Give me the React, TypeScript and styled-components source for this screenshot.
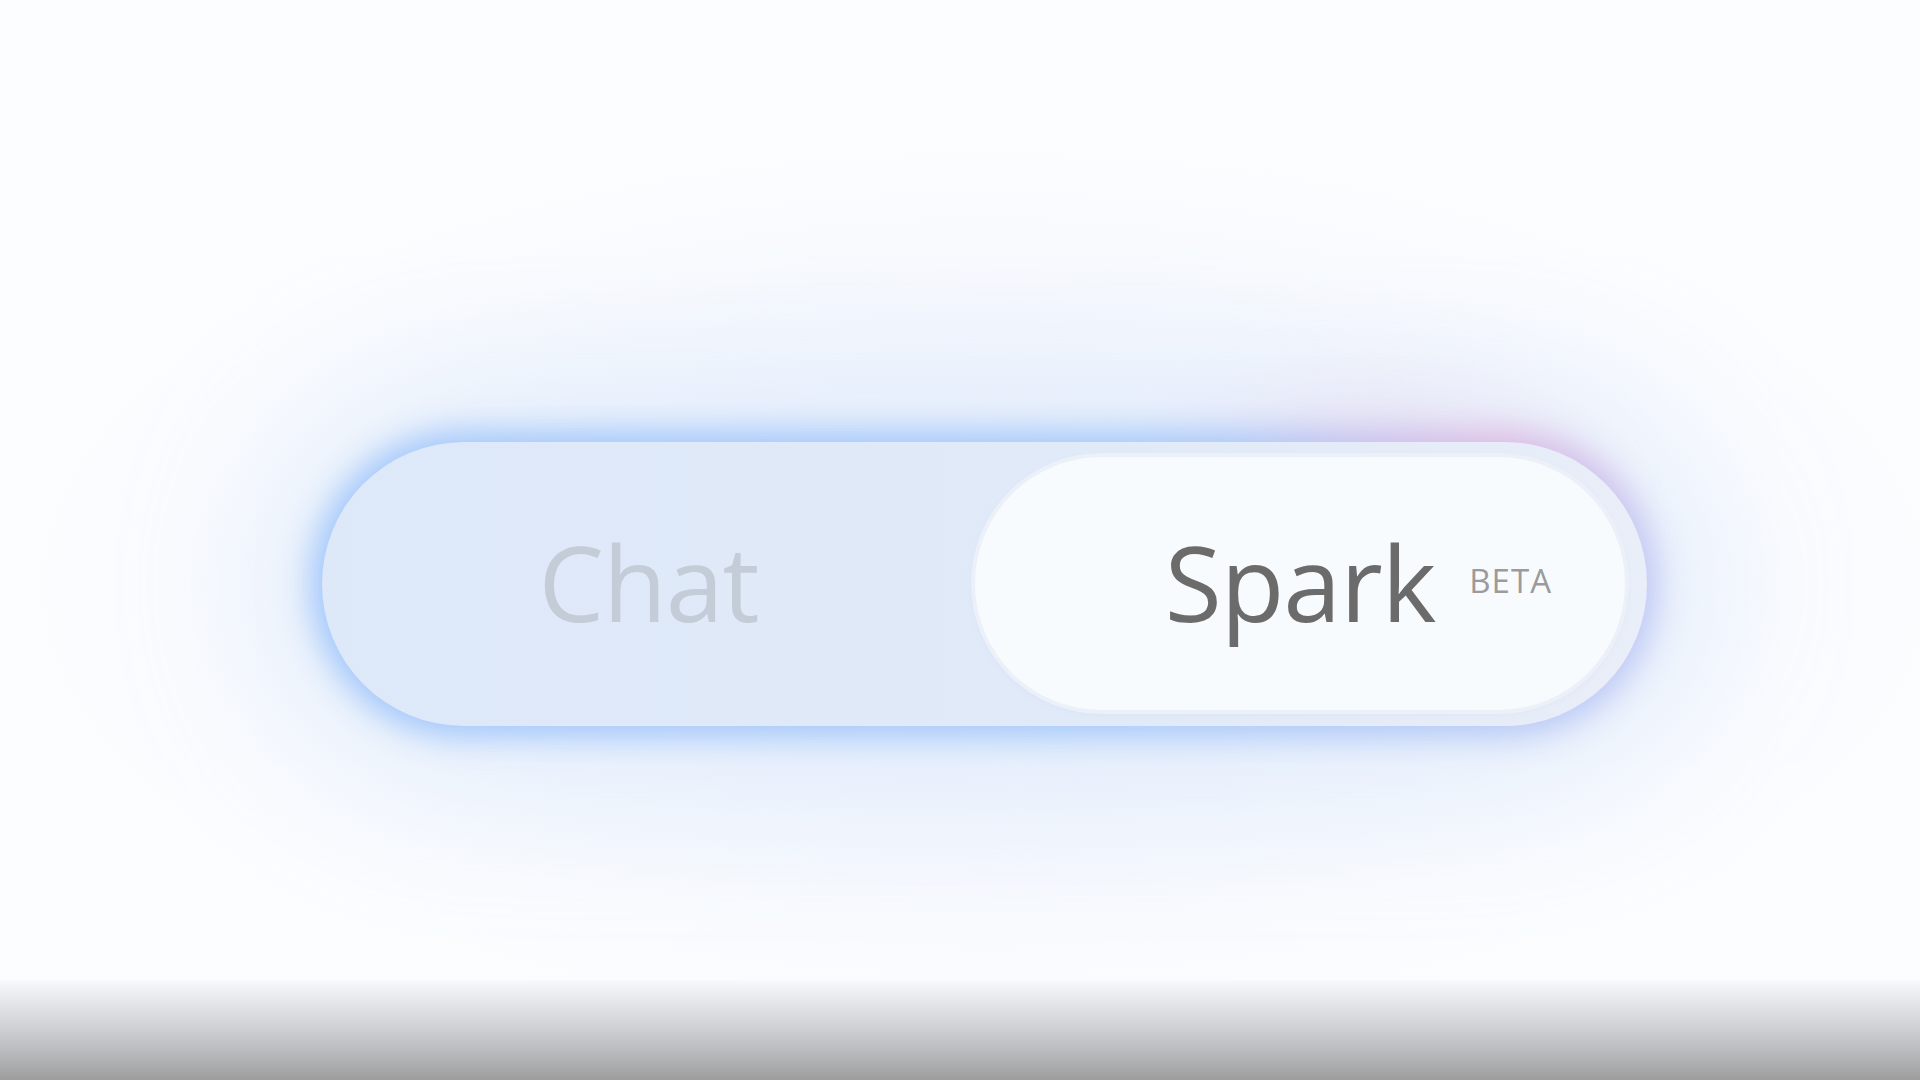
import styled, { createGlobalStyle } from 'styled-components'

const GlobalStyle = createGlobalStyle`
  html, body {
    margin: 0;
    padding: 0;
    background: #fcfdfe;
    font-family: "Open Sans", "Noto Sans", sans-serif;
  }
`

const Screen = styled.div`
  position: relative;
  isolation: isolate;
  width: 1920px;
  height: 1080px;
  display: flex;
  flex-direction: column;
  overflow: hidden;
  background: radial-gradient(ellipse 1050px 480px at 985px 584px, #eaf1fc 0%, #f2f6fd 45%, #f9fbfe 78%, #fcfdfe 100%);
`

const Stage = styled.main`
  flex: 1;
  display: flex;
  align-items: flex-start;
  padding: 442px 0 0 322px;
`

const Toggle = styled.div`
  position: relative;
  width: 1325px;
  height: 284px;
  box-sizing: border-box;
  padding: 15px 22px 16px 0;
  border-radius: 142px;
  background: linear-gradient(90deg, #dde8f9 0%, #e1eaf8 60%, #e9eef8 100%);
  display: grid;
  grid-template-columns: 1fr 650px;
  box-shadow: 0 0 150px 50px rgba(200, 220, 250, 0.4);

  /* coloured glow ring, blue turning pink at the top right */
  &::after {
    content: '';
    position: absolute;
    inset: -10px;
    border-radius: 152px;
    background:
      radial-gradient(ellipse 260px 160px at 88% 0%, rgba(236, 170, 214, 0.95), rgba(236, 170, 214, 0) 100%),
      linear-gradient(90deg, #8fbcfa 0%, #97c0fa 60%, #a8bff4 85%, #bcbff2 100%);
    filter: blur(16px);
    z-index: -1;
  }

  /* soft pink haze above the right end */
  &::before {
    content: '';
    position: absolute;
    right: 10px;
    top: -90px;
    width: 520px;
    height: 330px;
    border-radius: 50%;
    background: radial-gradient(closest-side, rgba(235, 195, 225, 0.7), rgba(240, 215, 235, 0.35) 60%, rgba(255, 255, 255, 0) 100%);
    filter: blur(30px);
    z-index: -2;
  }
`

const Option = styled.div<{ $active?: boolean }>`
  position: relative;
  display: flex;
  align-items: center;
  justify-content: center;
  border-radius: 127px;
  font-size: 104px;
  letter-spacing: -1px;
  color: ${p => (p.$active ? '#6b6b6c' : '#c4ccd7')};
  background: ${p => (p.$active ? '#f8fbfe' : 'transparent')};
  box-shadow: ${p => (p.$active ? '0 0 0 4px #ebf0f9, 0 2px 8px rgba(150, 170, 200, 0.15)' : 'none')};
`

const Label = styled.span`
  position: relative;
  line-height: 1;
  margin-top: -4px;
`

const Badge = styled.span`
  position: absolute;
  left: calc(100% + 34px);
  top: 34px;
  font-size: 33px;
  letter-spacing: 1px;
  color: #9b9b9c;
`

const BottomFade = styled.div`
  height: 100px;
  background: linear-gradient(180deg, #f8f9fb 0%, #e4e6e9 22%, #c9cacd 55%, #b1b2b4 80%, #9d9d9e 100%);
`

export default function App() {
  return (
    <>
      <GlobalStyle />
      <Screen>
        <Stage>
          <Toggle>
            <Option>
              <Label>Chat</Label>
            </Option>
            <Option $active>
              <Label>
                Spark
                <Badge>BETA</Badge>
              </Label>
            </Option>
          </Toggle>
        </Stage>
        <BottomFade />
      </Screen>
    </>
  )
}
